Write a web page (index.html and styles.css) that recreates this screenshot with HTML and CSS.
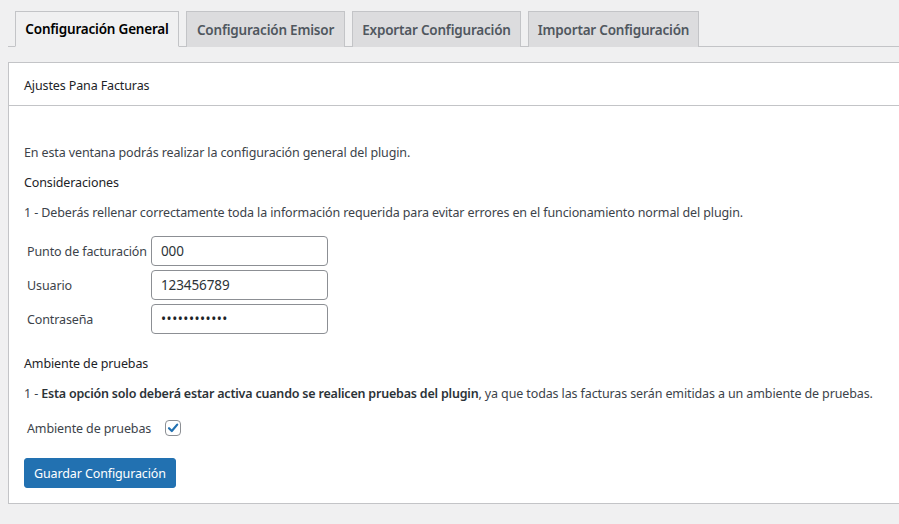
FILE: index.html
```html
<!DOCTYPE html>
<html lang="es">
<head>
<meta charset="utf-8">
<title>Ajustes Pana Facturas</title>
<link rel="stylesheet" href="styles.css">
</head>
<body>
<div class="wrap">
  <nav class="tabs">
    <a class="tab tab-active">Configuración General</a>
    <a class="tab">Configuración Emisor</a>
    <a class="tab">Exportar Configuración</a>
    <a class="tab">Importar Configuración</a>
  </nav>
  <section class="panel">
    <h2 class="panel-title">Ajustes Pana Facturas</h2>
    <div class="panel-body">
      <p class="text">En esta ventana podrás realizar la configuración general del plugin.</p>
      <h4 class="subhead">Consideraciones</h4>
      <p class="text">1 - Deberás rellenar correctamente toda la información requerida para evitar errores en el funcionamiento normal del plugin.</p>
      <div class="form">
        <div class="row"><label class="label">Punto de facturación</label><input class="input" type="text" value="000"></div>
        <div class="row"><label class="label">Usuario</label><input class="input" type="text" value="123456789"></div>
        <div class="row"><label class="label">Contraseña</label><input class="input pw" type="password" value="abcdefghijkl"></div>
      </div>
      <h4 class="subhead sub2">Ambiente de pruebas</h4>
      <p class="text">1 - <strong>Esta opción solo deberá estar activa cuando se realicen pruebas del plugin</strong>, ya que todas las facturas serán emitidas a un ambiente de pruebas.</p>
      <div class="check-row">
        <span class="label">Ambiente de pruebas</span>
        <span class="checkbox"><svg width="14" height="14" viewBox="0 0 14 14"><path d="M3 7.2 L5.8 10 L11.2 3.6" fill="none" stroke="#2271b1" stroke-width="2.2" stroke-linecap="round" stroke-linejoin="round"/></svg></span>
      </div>
      <button class="btn">Guardar Configuración</button>
    </div>
  </section>
</div>
</body>
</html>
```

FILE: styles.css
```css
html, body {
  margin: 0;
  padding: 0;
  background: #f0f0f1;
  overflow: hidden;
}
body {
  font-family: "Noto Sans", "Open Sans", sans-serif;
  font-size: 12.5px;
  letter-spacing: -0.12px;
  color: #3c434a;
}
.wrap {
  padding: 11px 0 0 8px;
  margin-right: -4px;
}
.tabs {
  display: flex;
  gap: 7px;
  padding-left: 7px;
  border-bottom: 1px solid #c3c4c7;
  height: 35px;
}
.tab {
  box-sizing: border-box;
  height: 36px;
  padding: 0 4px;
  display: flex;
  align-items: center;
  justify-content: center;
  white-space: nowrap;
  font-size: 13.5px;
  letter-spacing: -0.2px;
  font-weight: 600;
  color: #50575e;
  background: #dcdcde;
  border: 1px solid #c3c4c7;
  border-bottom: none;
}
.tab:nth-child(1) { width: 164px; }
.tab:nth-child(2) { width: 159px; }
.tab:nth-child(3) { width: 169px; }
.tab:nth-child(4) { width: 171px; }
.tab-active {
  background: #f0f0f1;
  color: #000;
  border-bottom: 1px solid #f0f0f1;
}
.panel {
  margin-top: 15px;
  background: #fff;
  border: 1px solid #c3c4c7;
}
.panel-title {
  margin: 0;
  height: 43px;
  box-sizing: border-box;
  padding: 3px 15px 0;
  display: flex;
  align-items: center;
  font-size: 12.5px;
  font-weight: 400;
  color: #1d2327;
  border-bottom: 1px solid #c3c4c7;
}
.panel-body {
  padding: 38px 15px 15px;
}
.text {
  margin: 0 0 12px;
  line-height: 18px;
  white-space: nowrap;
}
.text strong {
  font-weight: 600;
  letter-spacing: -0.2px;
  color: #2c3338;
}
.subhead {
  margin: 0 0 12px;
  font-size: 12.5px;
  font-weight: 400;
  color: #1d2327;
  line-height: 18px;
}
.sub2 { margin-top: 21px; }
.form {
  display: flex;
  flex-direction: column;
  gap: 4px;
  margin-top: 14px;
}
.row {
  display: flex;
  align-items: center;
  height: 30px;
}
.label {
  padding-left: 3px;
  width: 124px;
  white-space: nowrap;
  color: #3c434a;
}
.input {
  box-sizing: border-box;
  width: 177px;
  height: 30px;
  margin: 0;
  border: 1px solid #8c8f94;
  border-radius: 4px;
  padding: 0 9px;
  font-family: inherit;
  font-size: 13.5px;
  letter-spacing: -0.1px;
  color: #2c3338;
  background: #fff;
  outline: none;
}
.pw {
  letter-spacing: 0.5px;
  color: #1d2327;
}
.check-row {
  display: flex;
  align-items: center;
  margin-top: 15px;
  height: 20px;
}
.check-row .label {
  width: auto;
  margin-right: 14px;
}
.checkbox {
  box-sizing: border-box;
  width: 16px;
  height: 16px;
  border: 1px solid #8c8f94;
  border-radius: 4px;
  display: flex;
  align-items: center;
  justify-content: center;
}
.btn {
  display: block;
  margin-top: 20px;
  height: 30px;
  padding: 0 9px;
  background: #2271b1;
  color: #fff;
  border: 1px solid #2271b1;
  border-radius: 3px;
  font-family: inherit;
  font-size: 12.5px;
  letter-spacing: -0.12px;
}
```
